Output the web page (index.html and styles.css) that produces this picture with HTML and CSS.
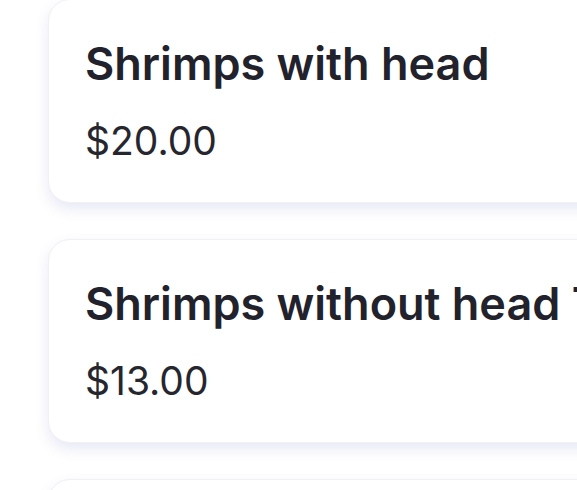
FILE: index.html
```html
<!DOCTYPE html>
<html lang="en">
<head>
<meta charset="UTF-8">
<title>Menu</title>
<meta name="viewport" content="width=device-width, initial-scale=1">
<link rel="stylesheet" href="styles.css">
</head>
<body>

<div class="list">
  <div class="item">
    <div class="item-name">Shrimps with head</div>
    <div class="item-price">$20.00</div>
  </div>
  <div class="item">
    <div class="item-name">Shrimps without head Tiger</div>
    <div class="item-price">$13.00</div>
  </div>
  <div class="item">
    <div class="item-name">Squid rings</div>
    <div class="item-price">$15.00</div>
  </div>
</div>

</body>
</html>
```

FILE: styles.css
```css
* {
  box-sizing: border-box;
}

/* Page */
body {
  font-family: 'Inter', 'Noto Sans', sans-serif;
  margin: 0;
  color: #22222c;
  background-color: #ffffff;
  overflow: hidden;
}

/* Item list */
.list {
  display: flex;
  flex-direction: column;
  gap: 36px;
  padding-left: 48px;
  margin-top: -1px;
}

/* Single menu card */
.item {
  width: 640px;
  height: 204px;
  padding: 38px 36px 0;
  background-color: #fff;
  border: 1px solid #f1f1f4;
  border-radius: 22px;
  box-shadow: 0 6px 14px rgba(92, 92, 190, 0.14);
}

.item-name {
  font-size: 45px;
  font-weight: 600;
  line-height: 52px;
  white-space: nowrap;
}

.item-price {
  font-size: 39px;
  font-weight: 400;
  line-height: 50px;
  margin-top: 26px;
  color: #26262e;
}
```
